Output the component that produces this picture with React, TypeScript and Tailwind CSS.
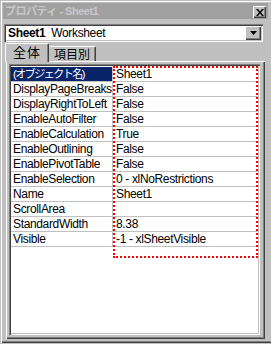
import React from "react"

const rows: [string, string][] = [
  ["(オブジェクト名)", "Sheet1"],
  ["DisplayPageBreaks", "False"],
  ["DisplayRightToLeft", "False"],
  ["EnableAutoFilter", "False"],
  ["EnableCalculation", "True"],
  ["EnableOutlining", "False"],
  ["EnablePivotTable", "False"],
  ["EnableSelection", "0 - xlNoRestrictions"],
  ["Name", "Sheet1"],
  ["ScrollArea", ""],
  ["StandardWidth", "8.38"],
  ["Visible", "-1 - xlSheetVisible"],
]

const sunken =
  "shadow-[inset_1px_1px_#808080,inset_2px_2px_#404040,inset_-1px_-1px_#ffffff,inset_-2px_-2px_#c0c0c0]"
const raised =
  "shadow-[inset_1px_1px_#ffffff,inset_-1px_-1px_#404040,inset_-2px_-2px_#808080]"

export default function App() {
  return (
    <div className="w-[271px] h-[344px] bg-[#c0c0c0] pl-px pt-px text-black font-['Liberation_Sans','Noto_Sans_CJK_JP',sans-serif] text-[12px] leading-[14px] overflow-hidden">
      <div className="w-[270px] h-[342px] border-l border-t border-white shadow-[inset_0_-1px_#404040,inset_0_-2px_#808080] flex flex-col">
        {/* title bar */}
        <div className="ml-px mr-[3px] mt-px h-[16px] bg-[#a0a0a0] flex items-center justify-between">
          <span className="ml-[2px] font-bold text-[11px] text-[#c8c8c8] tracking-[-0.5px]">
            プロパティ - Sheet1
          </span>
          <div className={`mr-[2px] mt-[2px] w-[13px] h-[12px] bg-[#c0c0c0] flex items-center justify-center ${raised}`}>
            <svg width="8" height="7" viewBox="0 0 8 7">
              <path d="M0 0h2l2 2.5L6 0h2L5 3.5 8 7H6L4 4.5 2 7H0l3-3.5z" fill="#000" />
            </svg>
          </div>
        </div>

        {/* object dropdown */}
        <div className={`mt-[5px] ml-[2px] w-[259px] h-[18px] bg-white p-[2px] flex ${sunken}`}>
          <div className="flex-1 flex items-center pl-[2px] gap-[6px] tracking-[-0.35px]">
            <span className="font-bold">Sheet1</span>
            <span>Worksheet</span>
          </div>
          <div className={`w-[16px] h-[14px] bg-[#c0c0c0] flex items-center justify-center ${raised}`}>
            <svg width="7" height="4" viewBox="0 0 7 4">
              <path d="M0 0h7L3.5 4z" fill="#000" />
            </svg>
          </div>
        </div>

        {/* tabs */}
        <div className="mt-px h-[18px] flex items-end pl-[3px]">
          <div className="relative z-10 -mb-px w-[44px] h-[19px] bg-[#c0c0c0] rounded-t-[2px] border-l border-t border-white shadow-[inset_-1px_0_#808080] border-r border-r-[#404040] flex items-start justify-center pt-[2px] text-[13px] tracking-[1px]">
            全体
          </div>
          <div className="w-[47px] h-[15px] bg-[#c0c0c0] rounded-t-[2px] border-t border-white border-r border-r-[#404040] shadow-[inset_-1px_0_#808080] flex items-start justify-center pt-px text-[12px]">
            項目別
          </div>
        </div>

        {/* tab panel */}
        <div className={`ml-[4px] w-[259px] h-[278px] pl-[3px] pt-[3px] ${raised}`}>
          <div className={`relative w-[251px] h-[271px] bg-white p-[2px] tracking-[-0.35px] ${sunken}`}>
            <div className="pt-px">
              {rows.map(([name, value], i) => (
                <div key={name} className="flex h-[15px] border-b border-[#c0c0c0]">
                  <div
                    className={`w-[102px] border-r border-[#c0c0c0] pl-[2px] whitespace-nowrap overflow-hidden ${
                      i === 0 ? "bg-[#0a246a] text-white" : ""
                    }`}
                  >
                    {i === 0 ? (
                      <span className="text-[11px] tracking-[-1.5px]">{name}</span>
                    ) : (
                      name
                    )}
                  </div>
                  <div className="flex-1 pl-[3px] whitespace-nowrap">{value}</div>
                </div>
              ))}
            </div>
            {/* focus rectangle around value column */}
            <div className="absolute left-[104px] top-[2px] w-[145px] h-[192px] border-2 border-dotted border-[#ff0000] pointer-events-none" />
          </div>
        </div>
      </div>
    </div>
  )
}
